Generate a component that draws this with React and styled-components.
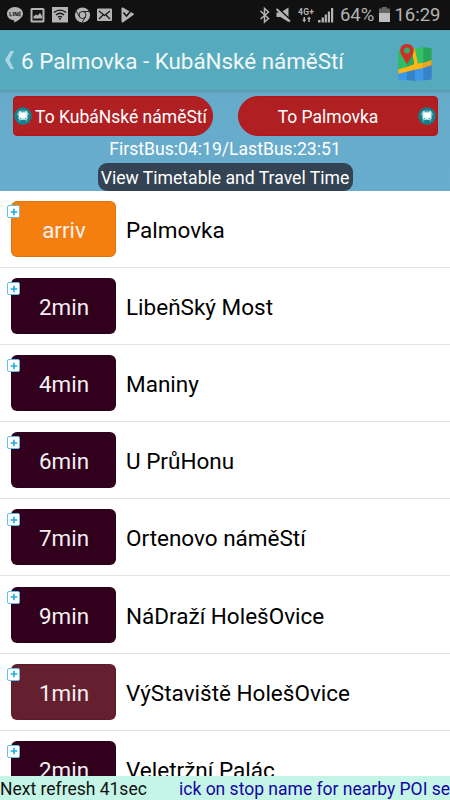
import styled, { createGlobalStyle } from "styled-components";

const stops = [
  { time: "arriv", name: "Palmovka", color: "#f57f0e" },
  { time: "2min", name: "LibeňSký Most" },
  { time: "4min", name: "Maniny" },
  { time: "6min", name: "U PrůHonu" },
  { time: "7min", name: "Ortenovo náměStí" },
  { time: "9min", name: "NáDraží HolešOvice" },
  { time: "1min", name: "VýStaviště HolešOvice", color: "#64202e" },
  { time: "2min", name: "Veletržní Palác" },
];

function App() {
  return (
    <Screen>
      <GlobalStyle />
      <StatusBar>
        <NotificationIcons />
        <StatusRight>
          <SignalIcons />
          <StatusText>64%</StatusText>
          <Battery />
          <StatusText>16:29</StatusText>
        </StatusRight>
      </StatusBar>
      <Header>
        <BackArrow />
        <Title>6 Palmovka - KubáNské náměStí</Title>
        <MapIcon />
      </Header>
      <RoutePanel>
        <Directions>
          <DirectionButton $side="left">
            <BusIcon />
            <DirectionText>To KubáNské náměStí</DirectionText>
          </DirectionButton>
          <DirectionButton $side="right">
            <DirectionText>To Palmovka</DirectionText>
            <BusIcon />
          </DirectionButton>
        </Directions>
        <Hours>FirstBus:04:19/LastBus:23:51</Hours>
        <TimetableButton>View Timetable and Travel Time</TimetableButton>
      </RoutePanel>
      <StopList>
        {stops.map((stop) => (
          <StopRow key={stop.name}>
            <TimeBadge $color={stop.color}>
              {stop.time}
              <Plus>
                <svg width="8" height="8" viewBox="0 0 8 8">
                  <path d="M4 .7v6.6M.7 4h6.6" stroke="#20a9e1" strokeWidth="1.6" />
                </svg>
              </Plus>
            </TimeBadge>
            <StopName>{stop.name}</StopName>
          </StopRow>
        ))}
      </StopList>
      <Footer>
        <Refresh>Next refresh 41sec</Refresh>
        <Marquee>ick on stop name for nearby POI sea</Marquee>
      </Footer>
    </Screen>
  );
}

export default App;

function NotificationIcons() {
  return (
    <svg width="150" height="30" viewBox="0 0 150 30" fill="#b4b4b4">
      <path d="M15 7c-4.600 0-8 3-8 6.700 0 3.600 3 6 6.700 6.600.6.100.6.700.5 2.300 4.700-2.600 8.800-5.300 8.800-8.900C23 10 19.600 7 15 7z" />
      <path
        d="M10 12v3.800h1.800M13.300 12v4M15 16v-4l2.200 4v-4M20.800 12.200h-1.900v3.600h1.900M19.200 14h1.500"
        fill="none"
        stroke="#151515"
        strokeWidth=".9"
      />
      <rect x="30.500" y="8" width="14" height="14.500" rx="1.500" />
      <rect x="32.500" y="10" width="10" height="10.500" fill="#151515" />
      <path d="M33.500 18.500v-2l2.500-2 1.500 1 2.500-2.500 2 3v2.500z" />
      <rect x="52" y="7" width="16" height="15.500" />
      <g fill="none" stroke="#151515" strokeWidth="1.300">
        <path d="M54 12.600c3.500-3.200 8.500-3.200 12 0M56 15c2.500-2.200 5.500-2.200 8 0M58 17.200c1.300-1.100 2.700-1.100 4 0" />
      </g>
      <circle cx="60" cy="18.800" r="1" fill="#151515" />
      <circle cx="82.500" cy="15" r="7.600" />
      <g fill="none" stroke="#222" strokeWidth="1">
        <circle cx="82.500" cy="15" r="3.500" />
        <path d="M82.500 11.500h7M79.500 16.700 76 10.800M85.500 16.700 82 22.600" />
      </g>
      <rect x="97" y="8.500" width="15" height="12.500" rx="1" />
      <path
        d="m99 11 5.500 4.500L110 11M99 19l4-4M110 19l-4-4"
        fill="none"
        stroke="#151515"
        strokeWidth="1.300"
      />
      <path d="M121.500 8.200c0-.8.700-1 1.400-.6l10.500 6c.7.400.7 1 0 1.500l-10.500 7.300c-.7.400-1.400 0-1.400-.7z" />
      <path
        d="m123.500 12.500 3 3.500 6-7"
        fill="none"
        stroke="#151515"
        strokeWidth="1.600"
      />
    </svg>
  );
}

function SignalIcons() {
  return (
    <svg width="76" height="30" viewBox="260 0 76 30" fill="#b4b4b4">
      <path
        d="m261.500 11 8 7.500-4 3.500V8.500l4 3.500-8 7"
        fill="none"
        stroke="#b4b4b4"
        strokeWidth="1.500"
      />
      <path d="M277.500 12.500h4l8-5v14.500l-8-5h-4z" />
      <path d="m278 7.500 14 13" stroke="#111" strokeWidth="1.800" />
      <path d="m277.500 9 13.500 12.500" stroke="#b4b4b4" strokeWidth="2" />
      <text
        x="299"
        y="14.500"
        fontFamily="Roboto, sans-serif"
        fontSize="8.500"
        fontWeight="700"
        textLength="16"
      >
        4G+
      </text>
      <path d="M303.200 19.500h1.300v-2.500h1.500v2.500h1.300l-2 3zM308 19l2-2.500 2 2.500h-1.200v3h-1.500v-3z" />
      <path d="M319 20h2.500v2.500H319zM322.600 17.500h2.300v5h-2.300zM325.700 14.500h2.200v8h-2.200zM328.800 11.500h2.200v11h-2.200zM332 8h2.200v14.500H332z" />
    </svg>
  );
}

function Battery() {
  return (
    <svg width="11" height="15" viewBox="0 0 11 15">
      <path d="M3 0h5v1.500h3V15H0V1.500h3z" fill="#666" />
      <path d="M0 6h11v9H0z" fill="#bdbdbd" />
    </svg>
  );
}

function BackArrow() {
  return (
    <svg width="9" height="18" viewBox="0 0 9 18">
      <path d="M5.500 0H9L4.500 9 9 18H5.500L0 9z" fill="#a9d8e3" />
    </svg>
  );
}

function BusIcon() {
  return (
    <svg width="18" height="18" viewBox="0 0 18 18">
      <circle cx="9" cy="9" r="8.700" fill="#12808c" />
      <path
        d="M3.900 6v2.500M14.100 6v2.500M6.500 12.500 5 14.500M11.500 12.500l1.500 2"
        stroke="#8ccbd0"
        strokeWidth="1"
      />
      <rect x="4.500" y="3.800" width="9" height="9" rx="1.500" fill="#d3eef0" />
      <rect x="5.800" y="5.800" width="6.400" height="4.700" fill="#fff" />
      <path d="M6.500 4.700h5" stroke="#12808c" strokeWidth=".8" />
      <circle cx="6.400" cy="11.500" r=".6" fill="#12808c" />
      <circle cx="11.600" cy="11.500" r=".6" fill="#12808c" />
    </svg>
  );
}

// folded map with a location pin over its left edge
function MapIcon() {
  return (
    <MapSvg width="36" height="38" viewBox="0 0 36 38">
      <path d="M.3 7.500 8.700 5v23L.3 29z" fill="#2dbb63" />
      <path d="M8.700 5 17 5.500V26l-8.300 2z" fill="#28a85b" />
      <path d="m17 5.500 8.300-1.500v20L17 26z" fill="#31c268" />
      <path d="m25.300 4 8.400 1.500V20l-8.400 3z" fill="#27a559" />
      <path d="M.3 29.500 8.700 28v9L.3 37.500z" fill="#3f97e8" />
      <path d="m8.700 28 8.300-2v12l-8.300-1z" fill="#3583cb" />
      <path d="m17 26 8.300-2v13L17 38z" fill="#3f97e8" />
      <path d="m25.300 23 8.400-2v15.500l-8.400 1z" fill="#3583cb" />
      <path
        d="M.3 26.300 8.700 24l7.500-2.700L13.800 5.300l2.800.1L20 20.500l5.300-.8V25L17 26.800l-8.300 2L.3 30.800z"
        fill="#ffb515"
      />
      <path d="m25.300 19.700 8.400-2.700v5.200L25.300 25z" fill="#e9a51b" />
      <path
        d="M9 1C5 1 2.200 3.800 2.200 7.400c0 2.500 1.100 4.400 2.900 7.300L9 21.300l3.900-6.600c1.700-2.900 2.900-4.800 2.900-7.300C15.800 3.800 13 1 9 1z"
        fill="#cb3029"
      />
      <circle cx="9" cy="7.400" r="3" fill="#35ab70" />
    </MapSvg>
  );
}

const GlobalStyle = createGlobalStyle`
  * {
    box-sizing: border-box;
  }

  body {
    margin: 0;
    font-family: Roboto, "Noto Sans", sans-serif;
  }

  svg {
    display: block;
    flex-shrink: 0;
  }
`;

const Screen = styled.div`
  width: 450px;
  height: 800px;
  display: flex;
  flex-direction: column;
  overflow: hidden;
  background-color: white;
`;

const StatusBar = styled.div`
  height: 30px;
  flex-shrink: 0;
  display: flex;
  justify-content: space-between;
  background-color: #111;
  border-bottom: 1px solid #050505;
`;

const StatusRight = styled.div`
  display: flex;
  align-items: center;
  gap: 4.6px;
  padding-right: 9.5px;
`;

const StatusText = styled.span`
  padding-top: 1px;
  font-size: 18.5px;
  line-height: 30px;
  color: #b4b4b4;
`;

const Header = styled.div`
  height: 60px;
  flex-shrink: 0;
  display: flex;
  align-items: center;
  padding: 0 16px 0 5px;
  background-color: #55abbd;
`;

const Title = styled.h1`
  margin: 2px 0 0 7px;
  flex: 1;
  font-size: 22.4px;
  font-weight: 400;
  line-height: 60px;
  white-space: nowrap;
  color: #f3f8fa;
`;

const MapSvg = styled.svg`
  margin-top: 3px;
`;

const RoutePanel = styled.div`
  height: 101px;
  flex-shrink: 0;
  display: flex;
  flex-direction: column;
  align-items: center;
  padding-top: 6px;
  background: linear-gradient(#5797ae, #66abca 4px, #68adcd);
`;

const Directions = styled.div`
  width: 100%;
  display: flex;
  justify-content: space-between;
  padding: 0 12.5px;
`;

const DirectionButton = styled.button`
  width: 200px;
  height: 40px;
  display: flex;
  align-items: center;
  padding: 0 1px 0 0;
  border: 1px solid #b8141c;
  border-radius: ${(props) =>
    props.$side === "left" ? "4px 20px 20px 4px" : "20px 4px 4px 20px"};
  background-color: #b02022;
  font-family: inherit;
  color: white;
`;

const DirectionText = styled.span`
  flex: 1;
  padding-top: 2px;
  font-size: 17.5px;
  text-align: center;
  white-space: nowrap;
`;

const Hours = styled.div`
  font-size: 17.6px;
  line-height: 26px;
  color: white;
`;

const TimetableButton = styled.button`
  width: 255px;
  height: 28px;
  margin-top: 1px;
  padding: 1px 0 0;
  border: 0;
  border-radius: 9px;
  background-color: #334354;
  font-family: inherit;
  font-size: 17.6px;
  white-space: nowrap;
  color: white;
`;

const StopList = styled.div`
  height: 585px;
  overflow: hidden;
`;

const StopRow = styled.div`
  height: 77.1px;
  display: flex;
  align-items: center;
  padding-left: 11px;
  border-bottom: 1px solid #e2e2e2;
`;

const TimeBadge = styled.div`
  position: relative;
  width: 105px;
  height: 56px;
  display: flex;
  align-items: center;
  justify-content: center;
  padding: 2px 0 0 1px;
  border: 1px solid rgba(30, 0, 20, 0.1);
  border-radius: 6px;
  background-color: ${(props) => props.$color || "#31001d"};
  font-size: 22.4px;
  color: #f5f0f2;
`;

const Plus = styled.span`
  position: absolute;
  top: 3px;
  left: -5px;
  width: 13px;
  height: 13px;
  display: flex;
  align-items: center;
  justify-content: center;
  border: 1px solid #62bfe6;
  border-radius: 2px;
  background-color: white;
`;

const StopName = styled.div`
  margin: 2px 0 0 10px;
  font-size: 22.5px;
  white-space: nowrap;
  color: black;
`;

const Footer = styled.div`
  height: 24px;
  flex-shrink: 0;
  display: flex;
  background-color: #c5f5e6;
  font-size: 17.5px;
  line-height: 26px;
  white-space: nowrap;
`;

const Refresh = styled.div`
  width: 179px;
  flex-shrink: 0;
  color: #111;
`;

const Marquee = styled.div`
  flex: 1;
  overflow: hidden;
  color: #1503a5;
`;
